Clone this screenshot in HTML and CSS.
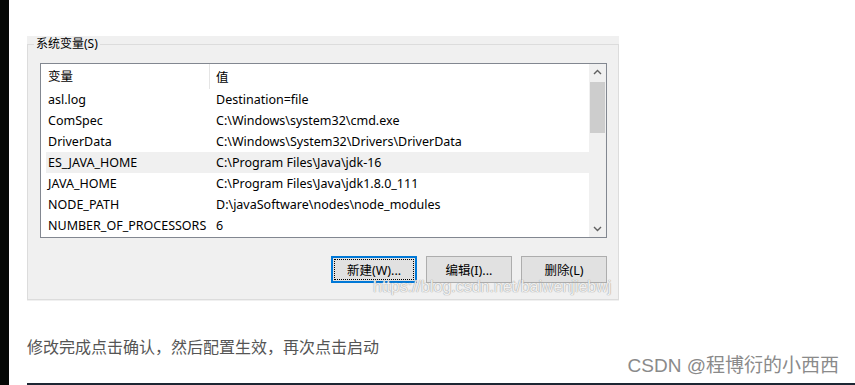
FILE: index.html
```html
<!DOCTYPE html>
<html lang="zh-CN">
<head>
  <meta charset="UTF-8">
  <meta name="viewport" content="width=device-width, initial-scale=1.0">
  <title>系统变量</title>
  <link rel="stylesheet" href="styles.css">
</head>
<body>
  <div class="page">
    <div class="side"></div>

    <div class="article">
      <div class="shot">
        <fieldset class="group">
          <legend>系统变量(S)</legend>

          <div class="listbox">
            <div class="list">
              <div class="head">
                <span class="col-name">变量</span>
                <span class="col-value">值</span>
              </div>
              <div class="row"><span class="col-name">asl.log</span><span class="col-value">Destination=file</span></div>
              <div class="row"><span class="col-name">ComSpec</span><span class="col-value">C:\Windows\system32\cmd.exe</span></div>
              <div class="row"><span class="col-name">DriverData</span><span class="col-value">C:\Windows\System32\Drivers\DriverData</span></div>
              <div class="row selected"><span class="col-name">ES_JAVA_HOME</span><span class="col-value">C:\Program Files\Java\jdk-16</span></div>
              <div class="row"><span class="col-name">JAVA_HOME</span><span class="col-value">C:\Program Files\Java\jdk1.8.0_111</span></div>
              <div class="row"><span class="col-name">NODE_PATH</span><span class="col-value">D:\javaSoftware\nodes\node_modules</span></div>
              <div class="row"><span class="col-name">NUMBER_OF_PROCESSORS</span><span class="col-value">6</span></div>
            </div>

            <div class="scrollbar">
              <svg class="arrow" width="17" height="17" viewBox="0 0 17 17">
                <path d="M5 10 L8.5 6.5 L12 10" fill="none" stroke="#606060" stroke-width="1.4"/>
              </svg>
              <div class="track">
                <div class="thumb"></div>
              </div>
              <svg class="arrow" width="17" height="17" viewBox="0 0 17 17">
                <path d="M5 7 L8.5 10.5 L12 7" fill="none" stroke="#606060" stroke-width="1.4"/>
              </svg>
            </div>
          </div>

          <div class="buttons">
            <button class="btn default"><span class="focus">新建(W)...</span></button>
            <button class="btn">编辑(I)...</button>
            <button class="btn">删除(L)</button>
          </div>

          <span class="url-mark">https://blog.csdn.net/baiwenjiebwj</span>
        </fieldset>
      </div>

      <p class="note">修改完成点击确认，然后配置生效，再次点击启动</p>

      <div class="sign">CSDN @程博衍的小西西</div>

      <div class="next-image"></div>
    </div>
  </div>
</body>
</html>
```

FILE: styles.css
```css
body {
  margin: 0;
  background: #ffffff;
  font-family: 'Noto Sans', 'Noto Sans CJK SC', sans-serif;
  overflow: hidden;
}

.page {
  display: flex;
  height: 385px;
}

.side {
  width: 9px;
  flex-shrink: 0;
  background: #050805;
}

.article {
  flex: 1;
  padding-left: 18px;
  display: flex;
  flex-direction: column;
}

.article > * {
  flex-shrink: 0;
}

/* dialog screenshot */
.shot {
  margin-top: 36px;
  width: 592px;
  height: 265px;
  background: #f0f0f0;
  box-sizing: border-box;
  padding-top: 1px;
  overflow: hidden;
}

.group {
  position: relative;
  margin: 0;
  border: 1px solid #dcdcdc;
  padding: 12px 11px 16px 12px;
  min-width: 0;
}

.group legend {
  font-size: 12px;
  color: #000;
  padding: 0 2px;
  margin-left: -6px;
  line-height: 14px;
}

.listbox {
  display: flex;
  width: 567px;
  height: 175px;
  box-sizing: border-box;
  border: 1px solid #828790;
  background: #ffffff;
}

.list {
  flex: 1;
  font-size: 12.5px;
  color: #000;
}

.head {
  display: flex;
  height: 25px;
  align-items: center;
}

.head .col-name {
  width: 161px;
  padding-left: 7px;
  height: 25px;
  line-height: 25px;
  border-right: 1px solid #e5e5e5;
}

.head .col-value {
  padding-left: 6px;
}

.row {
  display: flex;
  height: 21px;
  line-height: 21px;
  margin-left: 5px;
}

.row .col-name {
  width: 168px;
  padding-left: 2px;
  white-space: nowrap;
}

.row.selected {
  background: #f0f0f0;
}

.scrollbar {
  width: 17px;
  display: flex;
  flex-direction: column;
  background: #f0f0f0;
}

.arrow {
  display: block;
  flex-shrink: 0;
}

.track {
  flex: 1;
  padding: 1px 1px 0 1px;
}

.thumb {
  height: 51px;
  background: #cdcdcd;
}

.buttons {
  display: flex;
  justify-content: flex-end;
  gap: 9px;
  width: 567px;
  margin-top: 18px;
}

.btn {
  width: 86px;
  height: 27px;
  box-sizing: border-box;
  border: 1px solid #adadad;
  background: #e1e1e1;
  font-family: 'Noto Sans', 'Noto Sans CJK SC', sans-serif;
  font-size: 12.5px;
  color: #000;
  padding: 0;
}

.btn.default {
  border: 2px solid #0078d7;
  padding: 1px;
}

.btn .focus {
  display: flex;
  align-items: center;
  justify-content: center;
  height: 100%;
  border: 1px dotted #000;
  box-sizing: border-box;
}

.url-mark {
  position: absolute;
  left: 345px;
  top: 227px;
  font-family: 'Liberation Sans', sans-serif;
  font-size: 16px;
  color: rgba(255, 255, 255, 0.85);
  text-shadow: 0 0 1px #a0a0a0, 0 0 1px #a0a0a0;
  white-space: nowrap;
}

.note {
  margin: 36px 0 0 0;
  font-size: 16px;
  line-height: 20px;
  color: #555555;
}

.sign {
  align-self: flex-end;
  margin: -1px 16px 0 0;
  font-family: 'Liberation Sans', 'Noto Sans CJK SC', sans-serif;
  font-size: 19px;
  line-height: 20px;
  color: #8a8a8a;
}

.next-image {
  margin-top: 7px;
  height: 2px;
  background: #1d2633;
}
```
